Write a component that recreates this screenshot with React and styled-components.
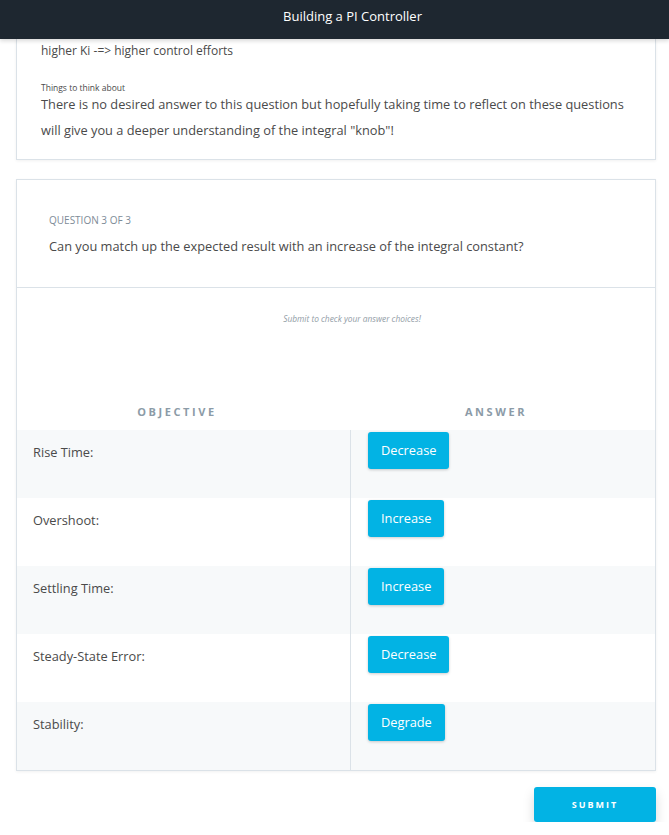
import React from "react";
import styled, { createGlobalStyle } from "styled-components";

const GlobalStyle = createGlobalStyle`
  body {
    margin: 0;
    background: #ffffff;
    font-family: "Open Sans", "Liberation Sans", sans-serif;
    color: #4a4a4a;
  }
`;

const TopBar = styled.header`
  height: 39px;
  padding-left: 36px;
  background-color: #1e2730;
  display: flex;
  align-items: center;
  justify-content: center;
  box-shadow: 0 2px 4px rgba(0, 0, 0, 0.15);
  position: relative;
  z-index: 2;
`;

const Title = styled.h1`
  margin: 0 0 8px;
  color: #ffffff;
  font-size: 13px;
  font-weight: 400;
`;

const Page = styled.main`
  padding: 0 13px 0 16px;
`;

const Card = styled.section`
  background: #ffffff;
  border: 1px solid #dbe2e8;
  border-top: ${(p) => (p.$clipped ? "none" : "1px solid #dbe2e8")};
  box-shadow: 0 1px 3px rgba(0, 0, 0, 0.06);
  margin-bottom: 19px;
`;

const NotesBody = styled.div`
  padding: 3px 20px 16px 24px;
`;

const Note = styled.p`
  margin: 0 0 23px;
  font-size: 12px;
  line-height: 18px;
`;

const SmallLabel = styled.div`
  font-size: 8.5px;
  line-height: 10px;
  margin-top: 1px;
`;

const Paragraph = styled.p`
  margin: -2px 0 0;
  font-size: 12.8px;
  line-height: 26px;
`;

const QuestionHead = styled.div`
  padding: 33px 32px 31px;
  border-bottom: 1px solid #dbe2e8;
`;

const Eyebrow = styled.div`
  font-size: 10px;
  line-height: 14px;
  font-weight: 400;
  color: #7d8b97;
  text-transform: uppercase;
`;

const Prompt = styled.p`
  margin: 9px 0 0;
  font-size: 12.8px;
  line-height: 20px;
`;

const Hint = styled.p`
  margin: 0;
  padding: 25px 0 0 32px;
  height: 106px;
  box-sizing: border-box;
  text-align: center;
  font-size: 8.4px;
  font-style: italic;
  color: #929da6;
`;

const Table = styled.div`
  display: grid;
  grid-template-columns: 334px 1fr;
`;

const HeadCell = styled.div`
  height: 36px;
  box-sizing: border-box;
  padding: 0 14px 2px 0;
  display: flex;
  align-items: center;
  justify-content: center;
  font-size: 11px;
  font-weight: 700;
  letter-spacing: 2.6px;
  color: #8c9ba7;
`;

const LabelCell = styled.div`
  height: 68px;
  box-sizing: border-box;
  padding: 12px 16px 0;
  font-size: 12.8px;
  line-height: 20px;
  background: ${(p) => (p.$shaded ? "#f7f9fa" : "#ffffff")};
  border-right: 1px solid #dbe2e8;
`;

const AnswerCell = styled.div`
  height: 68px;
  box-sizing: border-box;
  padding: 2px 17px 0;
  background: ${(p) => (p.$shaded ? "#f7f9fa" : "#ffffff")};
`;

const Chip = styled.button`
  height: 37px;
  padding: 0 13px 1px;
  border: none;
  border-radius: 3px;
  background: #02b3e4;
  color: #ffffff;
  font-family: inherit;
  font-size: 12.8px;
  box-shadow: 0 1px 3px rgba(0, 0, 0, 0.2);
`;

const Footer = styled.div`
  display: flex;
  justify-content: flex-end;
  margin-top: -3px;
`;

const SubmitButton = styled.button`
  width: 122px;
  height: 35px;
  border: none;
  border-radius: 3px;
  background: #02b3e4;
  color: #ffffff;
  font-family: inherit;
  font-size: 9px;
  font-weight: 700;
  letter-spacing: 2px;
  box-shadow: 0 6px 12px rgba(0, 0, 0, 0.15);
`;

const rows = [
  { objective: "Rise Time:", answer: "Decrease" },
  { objective: "Overshoot:", answer: "Increase" },
  { objective: "Settling Time:", answer: "Increase" },
  { objective: "Steady-State Error:", answer: "Decrease" },
  { objective: "Stability:", answer: "Degrade" },
];

const App = () => (
  <>
    <GlobalStyle />
    <TopBar>
      <Title>Building a PI Controller</Title>
    </TopBar>
    <Page>
      <Card $clipped>
        <NotesBody>
          <Note>higher Ki -=&gt; higher control efforts</Note>
          <SmallLabel>Things to think about</SmallLabel>
          <Paragraph>
            There is no desired answer to this question but hopefully taking time to reflect on these
            questions will give you a deeper understanding of the integral "knob"!
          </Paragraph>
        </NotesBody>
      </Card>
      <Card>
        <QuestionHead>
          <Eyebrow>Question 3 of 3</Eyebrow>
          <Prompt>Can you match up the expected result with an increase of the integral constant?</Prompt>
        </QuestionHead>
        <Hint>Submit to check your answer choices!</Hint>
        <Table>
          <HeadCell>OBJECTIVE</HeadCell>
          <HeadCell>ANSWER</HeadCell>
          {rows.map((row, i) => (
            <React.Fragment key={row.objective}>
              <LabelCell $shaded={i % 2 === 0}>{row.objective}</LabelCell>
              <AnswerCell $shaded={i % 2 === 0}>
                <Chip>{row.answer}</Chip>
              </AnswerCell>
            </React.Fragment>
          ))}
        </Table>
      </Card>
      <Footer>
        <SubmitButton>SUBMIT</SubmitButton>
      </Footer>
    </Page>
  </>
);

export default App;
